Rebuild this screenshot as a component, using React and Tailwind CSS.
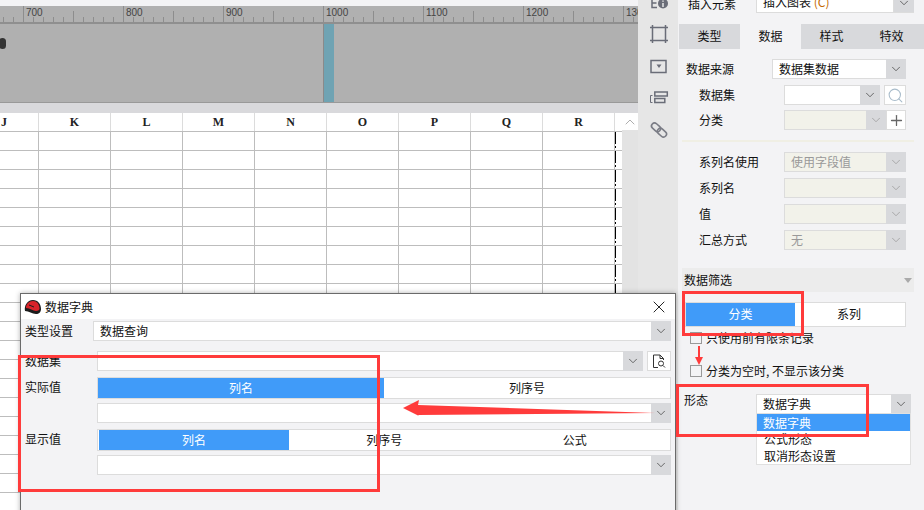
import { ChevronDown, ChevronUp, Plus, Search, X } from "lucide-react";

const cjk = "font-['Noto_Sans_CJK_SC',sans-serif]";
const columns = ["K", "L", "M", "N", "O", "P", "Q", "R"];
const rulerMarks = [600, 700, 800, 900, 1000, 1100, 1200, 1300];
const gridRows = Array.from({ length: 20 });

// one 100 unit stretch of the ruler
function RulerCell({ mark }) {
  return (
    <div className="relative w-[100px] h-[16px] shrink-0 overflow-hidden">
      <svg width="100" height="16" className="block">
        <path d="M0.5 0V16M50.5 5V16M10.5 11V16M20.5 11V16M30.5 11V16M40.5 11V16M60.5 11V16M70.5 11V16M80.5 11V16M90.5 11V16" stroke="#8d8d8d" />
      </svg>
      <span className="absolute left-[3px] top-[0px] text-[10px] leading-[14px] text-[#444] font-['Liberation_Sans',sans-serif]">{mark}</span>
    </div>
  );
}

function Ruler() {
  return (
    <div className="flex h-[16px] bg-[#b0b0b0] overflow-hidden">
      <div className="flex -ml-[77px]">
        {rulerMarks.map((m) => <RulerCell key={m} mark={m} />)}
      </div>
    </div>
  );
}

function Sheet() {
  return (
    <div className="relative flex-1 flex bg-white overflow-hidden">
      <div className="w-[622px] shrink-0 overflow-hidden">
        <div className="flex h-[19px] border-b border-[#bdbdbd]">
          <div className="w-[39px] shrink-0 border-r border-[#dcdcdc] pl-[1px] text-[12px] leading-[18px] font-['Liberation_Serif',serif] font-bold text-[#222]">J</div>
          {columns.map((c) => (
            <div key={c} className="w-[72px] shrink-0 border-r border-[#dcdcdc] text-center text-[12px] leading-[18px] font-['Liberation_Serif',serif] font-bold text-[#222]">{c}</div>
          ))}
        </div>
        {gridRows.map((_, i) => (
          <div key={i} className="flex h-[19px] border-b border-[#bdbdbd]">
            <div className="w-[39px] shrink-0 border-r border-[#bdbdbd]" />
            {columns.map((c) => (
              <div key={c} className="w-[72px] shrink-0 border-r border-[#bdbdbd]" />
            ))}
          </div>
        ))}
      </div>
      {/* page break line */}
      <div className="absolute left-[615px] top-[19px] bottom-0 w-[1px] bg-[repeating-linear-gradient(to_bottom,#000_0,#000_12px,transparent_12px,transparent_14px,#000_14px,#000_16px,transparent_16px,transparent_19px)]" />
      <div className="w-[16px] shrink-0 flex flex-col bg-[#e3e3e3]">
        <div className="h-[17px] bg-white flex items-center justify-center text-[#999]">
          <ChevronUp size={16} strokeWidth={1.2} />
        </div>
      </div>
    </div>
  );
}

function Arrow({ disabled }) {
  return (
    <div className="w-[20px] shrink-0 bg-[#d8d9dc] flex items-center justify-center text-[#444]">
      <ChevronDown size={14} strokeWidth={1.3} className={disabled ? "text-[#999]" : ""} />
    </div>
  );
}

function Select({ className = "", value, disabled }) {
  return (
    <div className={`flex h-[20px] ${className}`}>
      <div className={`flex-1 min-w-0 border border-[#dcdcdc] border-r-0 pl-[6px] text-[12px] leading-[18px] whitespace-nowrap overflow-hidden ${disabled ? "bg-[#f2f2ea] text-[#999]" : "bg-white text-[#111]"}`}>
        {value}
      </div>
      <Arrow disabled={disabled} />
    </div>
  );
}

function IconStrip() {
  return (
    <div className="w-[40px] shrink-0 bg-[#e6e6e6] relative flex flex-col items-center pl-[1px]">
      <svg width="20" height="12" viewBox="0 0 20 12" className="-mt-[1px]">
        <path d="M3 -1V8.500H8M3 4H7.500" fill="none" stroke="#6a6d78" strokeWidth="1.500" />
        <circle cx="14" cy="4.500" r="5" fill="#6a6d78" />
        <path d="M14 1.500V2.800M14 4V8" stroke="#e6e6e6" strokeWidth="1.500" />
      </svg>
      <svg width="18" height="18" viewBox="0 0 18 18" className="mt-[14px]">
        <rect x="2.500" y="2.500" width="13" height="13" fill="none" stroke="#6a6d78" strokeWidth="1.500" />
        <path d="M0 2.500H3M15 2.500H18M0 15.500H3M15 15.500H18M2.500 0V3M15.500 0V3M2.500 15V18M15.500 15V18" stroke="#6a6d78" strokeWidth="1.500" />
      </svg>
      <svg width="18" height="16" viewBox="0 0 18 16" className="mt-[16px]">
        <rect x="1" y="1.500" width="15" height="12" fill="none" stroke="#6a6d78" strokeWidth="1.500" />
        <path d="M6.500 5.500H11.500L9 9Z" fill="#6a6d78" />
      </svg>
      <svg width="20" height="14" viewBox="0 0 20 14" className="mt-[16px]">
        <path d="M3.500 4.500H1.500V11.500H3.500" fill="none" stroke="#6a6d78" />
        <rect x="5.800" y="1" width="12.500" height="4" fill="none" stroke="#6a6d78" strokeWidth="1.500" />
        <rect x="5.800" y="7.500" width="10" height="4" fill="none" stroke="#6a6d78" strokeWidth="1.500" />
      </svg>
      <svg width="18" height="18" viewBox="0 0 18 18" className="mt-[16px]">
        <g fill="none" stroke="#7a7c85" strokeWidth="1.600" transform="rotate(42 9 9)">
          <rect x="0" y="6" width="10" height="6" rx="3" />
          <rect x="8" y="6" width="10" height="6" rx="3" />
        </g>
      </svg>
    </div>
  );
}

function FormRow({ label, indent, children, className = "" }) {
  return (
    <div className={`flex items-center h-[20px] ${className}`}>
      <span className={`${indent ? "w-[100px] pl-[15px]" : "w-[100px] pl-[2px]"} shrink-0 text-[12px] text-[#111]`}>{label}</span>
      {children}
    </div>
  );
}

function Checkbox({ label, className = "" }) {
  return (
    <div className={`flex items-center gap-[4px] ${className}`}>
      <span className="w-[12px] h-[12px] border border-[#999] bg-[#f3f3f5] shrink-0" />
      <span className="text-[12px] leading-[14px] text-[#111] whitespace-nowrap">{label}</span>
    </div>
  );
}

function SidePanel() {
  return (
    <div className="flex-1 bg-[#f3f3f5] flex flex-col overflow-hidden">
      <div className="h-[13px] flex items-end pl-[10px] pr-[10px] shrink-0">
        <span className="w-[68px] text-[12px] leading-[16px] mb-[1px] text-[#111] shrink-0">插入元素</span>
        <div className="flex-1 flex h-[20px] border-b border-[#dcdcdc]">
          <div className="flex-1 bg-white border-x border-[#dcdcdc] pl-[6px] text-[12px] leading-[18px] text-[#111]">插入图表 <span className="text-[#c46a00]">(C)</span></div>
          <Arrow />
        </div>
      </div>
      <div className="flex h-[25px] mt-[11px] ml-[1px] text-[12px] text-[#111] shrink-0">
        <div className="w-[61px] bg-[#d8d9dc] text-center leading-[23px]">类型</div>
        <div className="w-[61px] bg-[#f3f3f5] text-center leading-[23px]">数据</div>
        <div className="w-[61px] bg-[#d8d9dc] text-center leading-[23px]">样式</div>
        <div className="flex-1 bg-[#d8d9dc] text-center leading-[23px] pr-[3px]">特效</div>
      </div>
      <div className="pl-[6px] pr-[18px]">
        <FormRow label="数据来源" className="mt-[10px]">
          <Select className="w-[134px] -ml-[12px]" value="数据集数据" />
        </FormRow>
        <FormRow label="数据集" indent className="mt-[6px]">
          <Select className="w-[96px]" />
          <div className="w-[22px] h-[20px] ml-[4px] bg-white border border-[#dcdcdc] flex items-center justify-center text-[#a9bccb]">
            <Search size={17} strokeWidth={1.500} />
          </div>
        </FormRow>
        <FormRow label="分类" indent className="mt-[5px]">
          <Select className="w-[102px]" disabled />
          <div className="w-[20px] h-[20px] bg-white border border-[#dcdcdc] flex items-center justify-center text-[#666]">
            <Plus size={17} strokeWidth={1.800} />
          </div>
        </FormRow>
      </div>
      <div className="h-[2px] bg-[#f0efe4] mt-[10px] ml-[4px] mr-[10px] shrink-0" />
      <div className="pl-[6px] pr-[18px]">
        <FormRow label="系列名使用" indent className="mt-[10px]"><Select className="w-[122px]" value="使用字段值" disabled /></FormRow>
        <FormRow label="系列名" indent className="mt-[6px]"><Select className="w-[122px]" disabled /></FormRow>
        <FormRow label="值" indent className="mt-[6px]"><Select className="w-[122px]" disabled /></FormRow>
        <FormRow label="汇总方式" indent className="mt-[6px]"><Select className="w-[122px]" value="无" disabled /></FormRow>
      </div>
      <div className="flex items-center justify-between h-[24px] mt-[18px] ml-[4px] mr-[10px] pl-[2px] pr-[2px] bg-[#ececec] text-[12px] text-[#111] shrink-0">
        <span>数据筛选</span>
        <span className="w-0 h-0 border-x-[4px] border-x-transparent border-t-[5px] border-t-[#aaa]" />
      </div>
      <div className="flex h-[25px] mt-[10px] ml-[7px] w-[221px] bg-white border border-[#dcdcdc] text-[12px] shrink-0">
        <div className="w-[109px] bg-[#409bf9] text-white text-center leading-[21px]">分类</div>
        <div className="flex-1 text-center leading-[21px] text-[#111] pr-[2px]">系列</div>
      </div>
      <Checkbox label="只使用前有限条记录" className="mt-[4px] ml-[12px]" />
      <Checkbox label="分类为空时, 不显示该分类" className="mt-[19px] ml-[12px]" />
      <div className="flex mt-[16px] ml-[6px]">
        <span className="w-[72px] text-[12px] leading-[14px] -mt-[1px] text-[#111]">形态</span>
        <Select className="w-[155px]" value="数据字典" />
      </div>
    </div>
  );
}

function TypeDropdown() {
  return (
    <div className="absolute left-[756px] top-[413px] w-[155px] bg-white border border-[#e0e0e0] text-[12px] leading-[17px] text-[#111]">
      <div className="bg-[#409bf9] text-white pl-[6px]">数据字典</div>
      <div className="pl-[7px] -mt-[1px]">公式形态</div>
      <div className="pl-[7px]">取消形态设置</div>
    </div>
  );
}

function DialogRow({ label, children, className = "" }) {
  return (
    <div className={`flex ${className}`}>
      <span className="w-[72px] pl-[4px] shrink-0 text-[12px] leading-[20px] text-[#111]">{label}</span>
      <div className="flex-1 min-w-0">{children}</div>
    </div>
  );
}

function Segments({ items, activeWidth, className = "" }) {
  return (
    <div className={`flex h-[22px] bg-white border border-[#dcdcdc] text-[12px] leading-[20px] ${className}`}>
      {items.map((t, i) => (
        <div
          key={t}
          className={i === 0 ? `${activeWidth} bg-[#409bf9] text-white text-center` : "flex-1 text-center text-[#111]"}
        >
          {t}
        </div>
      ))}
    </div>
  );
}

function Dialog() {
  return (
    <div className="absolute left-[20px] top-[293px] w-[656px] h-[240px] border border-[#6a6a6a] bg-[#f3f3f5] shadow-[0_0_5px_rgba(0,0,0,0.3)]">
      <div className="flex items-center h-[25px] bg-white pl-[3px] pr-[6px]">
        <svg width="18" height="16" viewBox="0 0 18 16">
          <path d="M1 12C0 7 3 1 9 1C14 1 17 5 17 10C17 13 15 15 12 15C8 15 5 12 1 12Z" fill="#1c1c1c" />
          <path d="M2 9C2 5 5 2 9 2C13 2 15 5 15.500 9C16 11 14 12 12 12C9 12 6 9 2 9Z" fill="#d8232a" />
          <path d="M5 6L10 8" stroke="#1c1c1c" />
        </svg>
        <span className="ml-[3px] text-[12px] text-[#111]">数据字典</span>
        <X size={20} strokeWidth={1.100} className="ml-auto text-[#111]" />
      </div>
      <div className="pr-[4px]">
        <DialogRow label="类型设置" className="mt-[2px]">
          <Select value="数据查询" />
        </DialogRow>
        <DialogRow label="数据集" className="mt-[10px]">
          <div className="flex gap-[4px] pl-[4px]">
            <Select className="flex-1" />
            <div className="w-[24px] h-[20px] bg-white border border-[#dcdcdc] flex items-center justify-center">
              <svg width="14" height="15" viewBox="0 0 14 15" fill="none" stroke="#333">
                <path d="M6 13.500H1.500V1H8L11.500 4.500V6M8 1V4.500H11.500" />
                <circle cx="9" cy="9.500" r="2.500" />
                <path d="M11 11.500L13 13.500" />
              </svg>
            </div>
          </div>
        </DialogRow>
        <DialogRow label="实际值" className="mt-[6px]">
          <Segments items={["列名", "列序号"]} activeWidth="w-[286px]" className="ml-[4px]" />
        </DialogRow>
        <DialogRow className="mt-[4px]">
          <Select className="ml-[4px]" />
        </DialogRow>
        <DialogRow label="显示值" className="mt-[6px]">
          <Segments items={["列名", "列序号", "公式"]} activeWidth="w-[190px] ml-[1px]" className="ml-[4px]" />
        </DialogRow>
        <DialogRow className="mt-[4px]">
          <Select className="ml-[4px]" />
        </DialogRow>
      </div>
    </div>
  );
}

// red boxes and arrows drawn over the screenshot
function Annotations() {
  const box = "absolute border-[3px] border-[#ff3b3b]";
  return (
    <>
      <div className={`${box} left-[18px] top-[355px] w-[362px] h-[137px]`} />
      <div className={`${box} left-[682px] top-[291px] w-[122px] h-[45px]`} />
      <div className={`${box} left-[676px] top-[384px] w-[193px] h-[53px]`} />
      <svg width="924" height="510" className="absolute left-0 top-0 pointer-events-none">
        <polygon points="403,408 419,400 418,405 655,413 418,415 419,416" fill="#ff3b3b" />
        <polygon points="698,346 700,346 700,357 703,357 699,365 695,357 698,357" fill="#ff3b3b" />
      </svg>
    </>
  );
}

export default function App() {
  return (
    <div className={`relative flex w-[924px] h-[510px] overflow-hidden bg-white ${cjk}`}>
      <div className="w-[638px] shrink-0 flex flex-col">
        <div className="h-[6px] bg-[#f3f3f5] shrink-0" />
        <div className="shrink-0 border-b-2 border-[#8f8f8f]"><Ruler /></div>
        <div className="relative h-[79px] bg-[#b0b0b0] border-b border-[#999] shrink-0">
          <div className="absolute left-[-1px] top-[14px] w-[7px] h-[11px] rounded-full bg-[#333]" />
          <div className="absolute left-[323px] top-0 bottom-0 w-[11px] bg-[#6fa3b3] border-l border-[#8a8a8a]" />
        </div>
        <div className="h-[10px] bg-[#d9d9dc] shrink-0" />
        <Sheet />
      </div>
      <IconStrip />
      <SidePanel />
      <Dialog />
      <TypeDropdown />
      <Annotations />
    </div>
  );
}
